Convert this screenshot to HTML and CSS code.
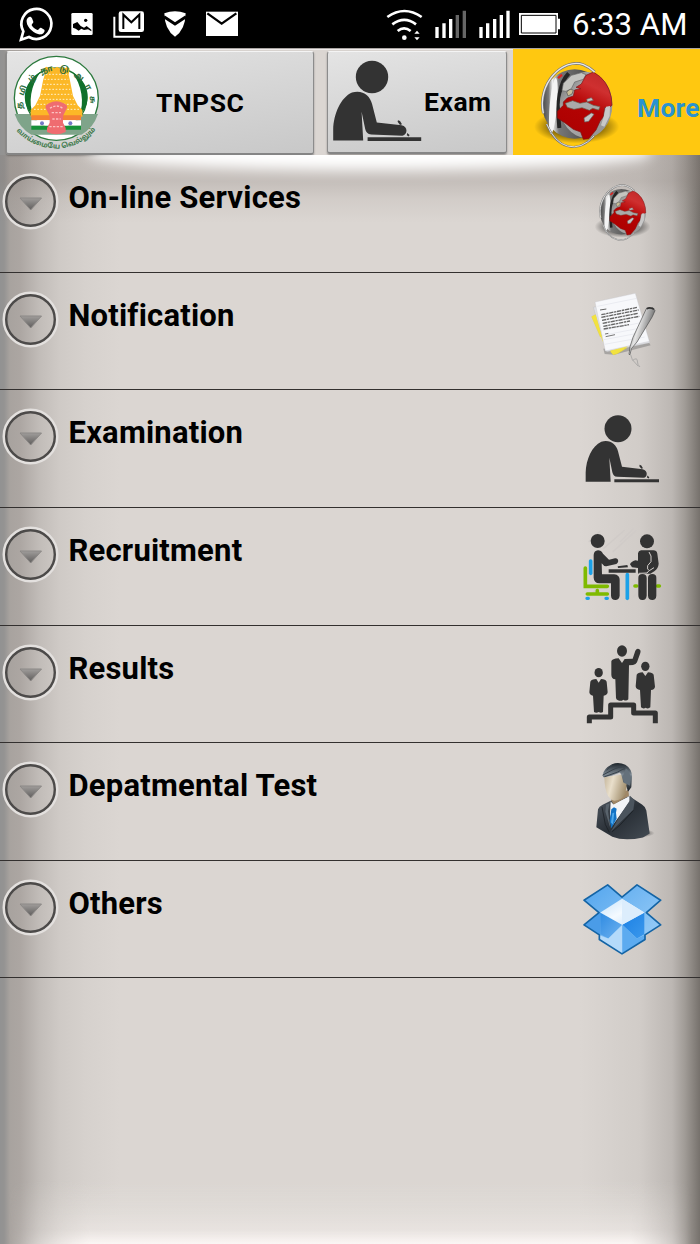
FILE: index.html
```html
<!DOCTYPE html>
<html lang="en">
<head>
    <meta charset="UTF-8">
    <title>TNPSC</title>
    <link rel="stylesheet" href="styles.css">
</head>
<body>
    <svg class="defs" width="0" height="0">
        <defs>
            <linearGradient id="rim" x1="0" x2="1">
                <stop offset="0" stop-color="#444"/>
                <stop offset=".1" stop-color="#777"/>
                <stop offset=".16" stop-color="#eee"/>
                <stop offset=".26" stop-color="#777"/>
                <stop offset="1" stop-color="#333"/>
            </linearGradient>
            <linearGradient id="land" x1="0.7" y1="0" x2="0.3" y2="1">
                <stop offset="0" stop-color="#c22a2a"/>
                <stop offset=".2" stop-color="#cf3030"/>
                <stop offset=".5" stop-color="#b40404"/>
                <stop offset="1" stop-color="#ac0000"/>
            </linearGradient>
            <linearGradient id="sea" x1="0" x2="1" y2="1">
                <stop offset="0" stop-color="#5c5c5c"/>
                <stop offset=".35" stop-color="#b4b4b4"/>
                <stop offset="1" stop-color="#8c8c8c"/>
            </linearGradient>
            <radialGradient id="shade">
                <stop offset="0" stop-color="#000" stop-opacity=".75"/>
                <stop offset=".6" stop-color="#000" stop-opacity=".45"/>
                <stop offset="1" stop-color="#000" stop-opacity="0"/>
            </radialGradient>
            <linearGradient id="arrowFill" x2="0" y2="1">
                <stop offset="0" stop-color="#a09d9b"/>
                <stop offset="1" stop-color="#5f5d5c"/>
            </linearGradient>
            <linearGradient id="pen" x1="0" y1="0" x2="1" y2=".5">
                <stop offset="0" stop-color="#444"/>
                <stop offset=".45" stop-color="#e6e6e6"/>
                <stop offset="1" stop-color="#444"/>
            </linearGradient>
            <linearGradient id="face" x2="1" y2=".3">
                <stop offset="0" stop-color="#c4b59b"/>
                <stop offset=".4" stop-color="#e9dfcb"/>
                <stop offset="1" stop-color="#a3906f"/>
            </linearGradient>
            <linearGradient id="hair" x2="0" y2="1">
                <stop offset="0" stop-color="#1c2329"/>
                <stop offset=".4" stop-color="#7b8791"/>
                <stop offset="1" stop-color="#161b20"/>
            </linearGradient>
            <linearGradient id="suit" x2="1" y2="1">
                <stop offset="0" stop-color="#515962"/>
                <stop offset=".5" stop-color="#2a3037"/>
                <stop offset="1" stop-color="#444c54"/>
            </linearGradient>
            <linearGradient id="flap" x2="1" y2="1">
                <stop offset="0" stop-color="#52a5ee"/>
                <stop offset="1" stop-color="#a3d2f8"/>
            </linearGradient>
            <linearGradient id="inner" x2="1" y2="1">
                <stop offset="0" stop-color="#c6e3fb"/>
                <stop offset=".5" stop-color="#f4faff"/>
                <stop offset="1" stop-color="#c4e2fb"/>
            </linearGradient>
            <linearGradient id="sideLeft" x2="1" y2="1">
                <stop offset="0" stop-color="#2f8be2"/>
                <stop offset="1" stop-color="#6fb3f0"/>
            </linearGradient>
            <linearGradient id="sideRight" x2="1" y2="1">
                <stop offset="0" stop-color="#1b80e4"/>
                <stop offset="1" stop-color="#3b98ec"/>
            </linearGradient>
        </defs>

        <symbol id="globe" viewBox="540 180 270 270">
            <ellipse cx="680" cy="380" rx="128" ry="50" fill="url(#shade)"/>
            <ellipse cx="674" cy="312" rx="98" ry="104" fill="url(#rim)"/>
            <ellipse cx="610" cy="318" rx="11" ry="84" fill="#f4f4f4" transform="rotate(5 610 318)"/>
            <path d="M656 220q-40 40-28 164" fill="none" stroke="#242424" stroke-width="12"/>
            <ellipse cx="708" cy="314" rx="79" ry="99" fill="url(#sea)"/>
            <path d="M640 250l24-24 30-8 14 6-8 14-26 8-10 20-16 8-12-2z" fill="#c4c4c0" stroke="#666" stroke-width="2"/>
            <path d="M678 262l16-10 14-26 22-10q44 24 54 76l2 24-12 8-10-2-4 28-10 14-12 26-22 26-16 2-8-22-22-8-26-20-22-14 0-20 18-18 0-10 12-12 18-6 4-18 18-4z" fill="url(#land)" stroke="#7c1010" stroke-width="2"/>
            <path d="M646 310l22-8 22 8 20-4 20 10 20 4-4 10-18-5-10 6-22-8-24 5-20-6z" fill="#aaa" stroke="#665" stroke-width="2"/>
            <path d="M710 298l14-5 6 8-18 4zM702 354l22-15 8 4-16 21-12 2z" fill="#c4c4c4" stroke="#666" stroke-width="2"/>
            <path d="M768 320l12-2-1 30-16 32-10-4 8-26z" fill="#c8c8c8"/>
            <path d="M650 276l10-8 10 2-4 12-12 6z" fill="#c9bd96" stroke="#555" stroke-width="2"/>
            <path d="M580 340C560 250 640 172 700 194q20 8 34 22" fill="none" stroke="#777" stroke-width="8"/>
            <path d="M580 340C560 250 640 172 700 194q20 8 34 22" fill="none" stroke="#e8e8e8" stroke-width="4"/>
            <path d="M590 372q24 56 62 66 42 12 80-30" fill="none" stroke="#777" stroke-width="6"/>
            <path d="M590 372q24 56 62 66 42 12 80-30" fill="none" stroke="#ddd" stroke-width="3"/>
            <path d="M622 232l12-11 4 6-12 10z" fill="#d22"/>
        </symbol>

        <symbol id="writer" viewBox="39 24.6 240 240">
            <g fill="#333">
                <circle cx="144" cy="87" r="40.500"/>
                <path d="M47 246V218C48 180 66 138 94 126c26-8 45 8 50 28l12 47 62 7c16 3 16 24 2 26l-78-3c-9-1-13-6-15-14l-9-43 4 72z"/>
                <path d="M133 238h134v9H133z"/>
                <path d="M209 195l5 2 5 8-5 2-6-8zM232 227l6 5-2 4-5-3z"/>
            </g>
        </symbol>

        <symbol id="arrow" viewBox="0 0 58 58">
            <circle cx="28.500" cy="28.500" r="26.500" fill="none" stroke="#e3e0de" stroke-width="3"/>
            <circle cx="28.500" cy="28.500" r="24.300" fill="none" stroke="#4c4a49" stroke-width="2.400"/>
            <path d="M18 25h21.500L28.700 37z" fill="url(#arrowFill)" stroke="#8b8886" stroke-width="1" stroke-linejoin="round"/>
        </symbol>
    </svg>

    <div class="status-bar">
        <svg width="350" height="48" viewBox="0 0 1050 144">
            <path d="M63 119l7-25a45 45 0 1 1 17 17z" fill="none" stroke="#fff" stroke-width="8"/>
            <path d="M84 53c5-5 10-3 12 2l4 10c1 4-6 7-5 11 4 7 9 11 17 14 4 0 7-8 11-7l10 6c3 5-3 13-10 14-15 3-42-19-43-37-1-6 1-10 4-13z" fill="#fff"/>
            <path d="M218 39h56q4 0 4 4v58q0 4-4 4h-56q-4 0-4-4V43q0-4 4-4z" fill="#fff"/>
            <path d="M219 83V72l13-6 10 12 10 5 8-5 14 11v5l-10-6-12 2-8-4-8 6-9-6z" fill="#000"/>
            <circle cx="257" cy="61" r="5" fill="#000"/>
            <path d="M343 50v60h77" fill="none" stroke="#fff" stroke-width="6"/>
            <rect x="356" y="34" width="76" height="62" rx="7" fill="#fff"/>
            <path d="M370 87V44l24 23 24-23v43" fill="none" stroke="#000" stroke-width="6"/>
            <path d="M493 40q32-12 64 0-1 50-32 70-31-20-32-70z" fill="#fff"/>
            <path d="M492 50l33 22 33-22" fill="none" stroke="#000" stroke-width="9"/>
            <path d="M618 35h96v73h-96z" fill="#fff"/>
            <path d="M622 40l43 31 44-31" fill="none" stroke="#000" stroke-width="7"/>
        </svg>
        <svg width="215" height="48" viewBox="0 0 645 144">
            <g fill="none" stroke="#fff" stroke-width="8">
                <path d="M112 51q51-36 103 0"/>
                <path d="M127 73q36-27 71 0" />
                <path d="M143 93q19-16 39 0"/>
            </g>
            <circle cx="163" cy="113" r="7" fill="#fff"/>
            <path d="M201 92l8 9h-16zM193 112h16l-8 9z" fill="#fff"/>
            <path d="M256 81h10v33h-10zM277 70h10v44h-10zM297 57h10v57h-10zM388 81h10v33h-10zM408 70h10v44h-10zM429 57h10v57h-10zM449 45h10v69h-10zM469 32h10v82h-10z" fill="#fff"/>
            <path d="M317 45h10v69h-10zM338 32h10v82h-10z" fill="#666"/>
            <path d="M507 39h117v17h6v32h-6v17H507z" fill="#fff"/>
            <path d="M514 46h104v53H514z" fill="none" stroke="#000" stroke-width="3"/>
        </svg>
        <span class="clock">6:33 AM</span>
    </div>

    <div class="app">
        <div class="tabs">
            <div class="tab tab-home">
                <svg width="90" height="98" viewBox="36 27 270 294">
                    <circle cx="169" cy="160" r="126" fill="#fff" stroke="#2c7a3e" stroke-width="4"/>
                    <path d="M44 207h250q-14 42-50 62H94q-36-20-50-62z" fill="#7fa48a"/>
                    <circle cx="169" cy="160" r="91" fill="#fff" stroke="#1c7431" stroke-width="4"/>
                    <path d="M122 80C62 115 64 182 100 210 84 175 92 120 122 80zM216 80c60 35 58 102 22 130 16-35 8-90-22-130z" fill="#11702b"/>
                    <path d="M132 70l7-5 8 5 8-5 8 5 8-5 8 5 8-5 8 5 8-5 6 6-3 18 4 18 9 46 14 28 14 14v20H92v-20l14-14 14-28 9-46 5-18z" fill="#fcb827"/>
                    <g stroke="#fff0c8" stroke-width="3" stroke-dasharray="5 5" fill="none">
                        <path d="M137 88h64M133 103h72M130 118h78M127 133h84M123 148h92M118 163h104M111 178h120M102 193h136"/>
                    </g>
                    <path d="M94 211h149v15H94z" fill="#f58233"/>
                    <path d="M94 226h149v16H94z" fill="#fff"/>
                    <path d="M94 242h149v12H94z" fill="#159137"/>
                    <circle cx="126" cy="235" r="6" fill="#7379c6"/>
                    <circle cx="211" cy="235" r="6" fill="#7379c6"/>
                    <path d="M139 193q-8-12 8-18 22-13 44 0 16 6 8 18l-10 20v20l8 16v12q-28 14-56 0v-12l8-16v-20z" fill="#ef6c70"/>
                    <path d="M150 190q19-14 38 0M155 203h28M157 222h25M148 245h43" fill="none" stroke="#fbc2c2" stroke-width="4" stroke-dasharray="7 4"/>
                    <path id="ringTop" d="M69 200A102 102 0 1 1 269 200" fill="none"/>
                    <path id="ringBottom" d="M47 254Q96 309 169 310 240 309 296 246" fill="none"/>
                    <text class="seal-name"><textPath href="#ringTop" startOffset="8">த மி ழ் நா டு அ ர சு</textPath></text>
                    <text class="seal-motto"><textPath href="#ringBottom" startOffset="4">வாய்மையே வெல்லும்</textPath></text>
                </svg>
                <span class="tab-label">TNPSC</span>
            </div>
            <div class="tab tab-exam">
                <svg width="96" height="96"><use href="#writer"/></svg>
                <span class="tab-label">Exam</span>
            </div>
            <div class="tab-more">
                <svg width="90" height="90"><use href="#globe"/></svg>
                <span class="tab-label">More</span>
            </div>
        </div>

        <div class="menu">
            <div class="menu-item">
                <svg class="expand"><use href="#arrow"/></svg>
                <span class="menu-label">On-line Services</span>
                <div class="menu-icon"><svg class="small-globe" width="59" height="59"><use href="#globe"/></svg></div>
            </div>
            <div class="menu-item">
                <svg class="expand"><use href="#arrow"/></svg>
                <span class="menu-label">Notification</span>
                <div class="menu-icon">
                    <svg width="80" height="80" viewBox="39 32 240 240">
                        <path d="M100 205l134-22 8 12-110 28-28-2z" fill="#777" opacity=".5"/>
                        <path d="M65 109l16-9 20 60-10 10zM122 214l50-12-30 18-12 3z" fill="#f2e23f" stroke="#d9c93a"/>
                        <path d="M70 81l120-24 50 130-130 27z" fill="#dfe0e4" stroke="#b5b5ba"/>
                        <path d="M65 109l12-6 24 86z" fill="#f2e23f"/>
                        <path d="M75 65l121-26 42 144-132 29z" fill="#f7f8fb" stroke="#c2c3c8"/>
                        <path d="M120 211l54-13-32 20-12 5z" fill="#f2e23f"/>
                        <path d="M82 78l118-24M98 150l110-22M98 165l114-22M102 178l116-22M104 192l120-22" stroke="#dcdfe6" stroke-width="1.5"/>
                        <path d="M90 89l19-3" stroke="#666" stroke-width="3"/>
                        <path d="M94 103l108-22M94 111l112-22M96 120l108-21M98 129l110-21M100 138l80-16M101 146l76-13" stroke="#666" stroke-width="4" stroke-dasharray="13 2 7 2"/>
                        <path d="M105 161l10-2M107 169l28-6" stroke="#777" stroke-width="3"/>
                        <path d="M229 85l20-3 6 9-8 18-46 76-17 20-4 18-3-1 3-23 9-28z" fill="url(#pen)" stroke="#4b4b4b" stroke-width="2"/>
                        <path d="M230 85q10-6 22 2" fill="none" stroke="#333" stroke-width="5"/>
                        <path d="M182 223l5 15 18 20M188 240q14-10 14 2t8 18" fill="none" stroke="#999" stroke-width="2"/>
                    </svg>
                </div>
            </div>
            <div class="menu-item">
                <svg class="expand"><use href="#arrow"/></svg>
                <span class="menu-label">Examination</span>
                <div class="menu-icon"><svg width="80" height="80"><use href="#writer"/></svg></div>
            </div>
            <div class="menu-item">
                <svg class="expand"><use href="#arrow"/></svg>
                <span class="menu-label">Recruitment</span>
                <div class="menu-icon">
                    <svg width="80" height="80" viewBox="39 32 240 240">
                        <path d="M56 80l34-32M100 100l64-56M128 110l72-66M50 250l40-38M190 246l60-60M150 80l40-40" stroke="#d0cbc8" stroke-width="4"/>
                        <g fill="none" stroke-linecap="round">
                            <path d="M46 158v55h66M52 236h60M82 226v8" stroke="#7fba00" stroke-width="11"/>
                            <path d="M62 137v37" stroke="#1ba1e8" stroke-width="11"/>
                            <path d="M172 178v71" stroke="#1ba1e8" stroke-width="11"/>
                            <path d="M195 212h5M262 212h6" stroke="#7fba00" stroke-width="11"/>
                            <path d="M51 249h4M108 249h4" stroke="#1ba1e8" stroke-width="10"/>
                        </g>
                        <g fill="#333">
                            <circle cx="83" cy="77" r="21"/>
                            <path d="M71 119q1-13 13-14 9 0 15 10l18 18 18-4c11-2 13 13 4 17l-30 7q-7 1-14-9l1 33h36c12 1 17 8 17 17v47q-2 13-13 13-12 0-13-13v-37H88q-16-1-17-17z"/>
                            <path d="M116 162h81v10h-81zM143 153l29-4 2 7-30 2zM180 147q3-8 16-12l8 1v22l-18-2z"/>
                            <circle cx="231" cy="78" r="21"/>
                            <path d="M204 114q1-8 9-9h37q10 0 12 10l4 30q-1 14-13 23l-12 7h-37zM205 187q0-11 12-11 13 0 13 12v53q-2 14-13 13-12 0-12-14zM234 187q1-11 13-11 12 0 12 11v54q-1 13-12 13-12 0-13-13z"/>
                        </g>
                        <path d="M237 110l6 12v17l-10 12q-3 12 5 15l14-9M206 174l25-1 6-7" fill="none" stroke="#d5d0cd" stroke-width="3"/>
                    </svg>
                </div>
            </div>
            <div class="menu-item">
                <svg class="expand"><use href="#arrow"/></svg>
                <span class="menu-label">Results</span>
                <div class="menu-icon">
                    <svg width="80" height="80" viewBox="39 26 240 240">
                        <g fill="#333">
                            <ellipse cx="156" cy="47" rx="15" ry="17"/>
                            <path d="M124 78q2-8 22-9l10 14 8-12 24-1 8-24q5-9 14-3 3 3 1 10l-10 28q-3 7-12 8l-12 1-2 102q-6 7-15 1-7 6-16 2-5-2-6-7l-2-56q-12-2-12-14z"/>
                            <ellipse cx="86" cy="112" rx="12.500" ry="14"/>
                            <path d="M61 139q3-7 18-8l7 11 7-11q14 1 17 8l3 32q-1 9-12 10l-2 49q-6 5-13 0-7 5-14 0l-3-49q-10-1-11-10z"/>
                            <ellipse cx="226" cy="93" rx="12.500" ry="14"/>
                            <path d="M200 118q3-6 18-7l8 11 8-11q14 1 17 7l4 36q-1 9-12 10l-2 52q-7 6-14 1-7 5-14-1l-3-52q-12-1-13-11z"/>
                        </g>
                        <path d="M58 264v-19h64v-36h69v24h65v31" fill="none" stroke="#333" stroke-width="15" stroke-linejoin="round"/>
                    </svg>
                </div>
            </div>
            <div class="menu-item">
                <svg class="expand"><use href="#arrow"/></svg>
                <span class="menu-label">Depatmental Test</span>
                <div class="menu-icon">
                    <svg width="80" height="80" viewBox="39 33.600 240 240">
                        <ellipse cx="184" cy="250" rx="70" ry="15" fill="url(#shade)"/>
                        <path d="M79 232l5-54q3-8 14-13l24-12 56-14 38 25q11 7 13 18l10 69-20 12q-56 12-92-2z" fill="url(#suit)"/>
                        <path d="M122 155l8 8 48-24 2 15-27 38-25 34-8-32z" fill="#f2f4f7"/>
                        <path d="M124 178l8-6 8 5-2 12 2 18-16 28-5-22z" fill="#1372c4"/>
                        <path d="M127 190l6-2-4 36-6-6z" fill="#4ba7eb"/>
                        <path d="M180 138l14 14-4 28-67 65 30-53 25-38z" fill="#4b545d"/>
                        <path d="M119 160l-5 24 8 54-16-52 2-22z" fill="#59636c"/>
                        <path d="M190 182l-40 44-24 20M96 172l10 52 12 24" fill="none" stroke="#171b20" stroke-width="2"/>
                        <path d="M127 140l48-20 2 18-46 26-7-12z" fill="#a08766"/>
                        <path d="M103 82l56-8 13 30-7 30q-8 16-31 19-11-1-20-15-10-19-11-56z" fill="url(#face)"/>
                        <path d="M98 77q1-20 28-34 20-8 40 2 20 12 20 36l-2 31-10 14-5-18 2-10-11-1-6-22-4-7-26 10-24 4z" fill="url(#hair)"/>
                        <path d="M98 76l28-15q24-12 37-9M103 81l39-14q18-10 23-10M126 46l-16 15" fill="none" stroke="#39424b" stroke-width="3"/>
                        <path d="M168 56l9 8 6 22-3 22-9-5-10-4-3-19z" fill="#65717b"/>
                    </svg>
                </div>
            </div>
            <div class="menu-item">
                <svg class="expand"><use href="#arrow"/></svg>
                <span class="menu-label">Others</span>
                <div class="menu-icon">
                    <svg width="80" height="80" viewBox="39 26.400 240 240">
                        <path d="M42 90l71-46 43 37 45-37 71 46-43 37 43 37-47 30v14l-69 43-68-43v-14l-46-30 45-37z" fill="url(#flap)"/>
                        <path d="M42 164l45-37 4 0v68z" fill="#4a9ce8"/>
                        <path d="M91 128l66 36-42 41-24-13z" fill="url(#sideLeft)"/>
                        <path d="M223 128l-66 36 44 41 22-13z" fill="url(#sideRight)"/>
                        <path d="M91 127l65-41 67 41-67 37z" fill="url(#inner)"/>
                        <path d="M156 86l67 41-67 37z" fill="#dcedfc"/>
                        <path d="M157 164l-42 41-27-10v13l69 43z" fill="#b4dafa"/>
                        <path d="M157 164l44 41 24-11v14l-68 43z" fill="#5cabf0"/>
                        <path d="M42 90l71-46 43 37 45-37 71 46-43 37 43 37-47 30v14l-69 43-68-43v-14l-46-30 45-37z" fill="none" stroke="#1464a5" stroke-width="5" stroke-linejoin="round"/>
                    </svg>
                </div>
            </div>
        </div>
    </div>
</body>
</html>
```

FILE: styles.css
```css
* {
    box-sizing: border-box;
}
body {
    margin: 0;
    width: 700px;
    height: 1244px;
    overflow: hidden;
    display: flex;
    flex-direction: column;
    font-family: Roboto, "Noto Sans", sans-serif;
    color: #000;
}
svg {
    display: block;
    flex-shrink: 0;
}
.defs {
    position: absolute;
}

/* status bar */
.status-bar {
    height: 48px;
    background: #000;
    display: flex;
    align-items: center;
    flex-shrink: 0;
}
.clock {
    margin-left: 7px;
    font-size: 31.2px;
    line-height: 48px;
    padding-top: 2px;
    color: #fff;
    white-space: nowrap;
}

/* page background with dark side edges */
.app {
    flex: 1;
    position: relative;
    background: linear-gradient(to right, #929292 0, #949392 4px, #a8a39f 10px, #aca6a2 20px, #c2bdb9 40px, #cfcac6 60px, #d6d1cd 85px, #dbd6d2 120px, #dbd6d2 580px, #d1ccc8 640px, #bcb7b3 672px, #a09b96 685px, #76716c 700px);
}
/* light rising from the bottom edge */
.app::after {
    content: "";
    position: absolute;
    left: 0;
    right: 0;
    bottom: 0;
    height: 64px;
    background: linear-gradient(to top, #fbf6f4 0, rgba(236, 231, 228, .75) 14px, rgba(228, 224, 220, .5) 36px, rgba(219, 214, 210, 0) 64px);
    -webkit-mask-image: linear-gradient(to right, transparent 8px, #000 90px, #000 630px, transparent 692px);
    mask-image: linear-gradient(to right, transparent 8px, #000 90px, #000 630px, transparent 692px);
}

/* tabs */
.tabs {
    height: 107px;
    display: flex;
    align-items: flex-start;
    padding-left: 6px;
    border-top: 1px solid #aaa5a3;
    box-shadow: inset 0 1px 0 #eeeaea;
}
.tab {
    margin-top: 2px;
    display: flex;
    border: 1px solid #8c8c8c;
    border-top-color: #f4f4f4;
    border-bottom: 2px solid #858585;
    border-radius: 3px;
    background: linear-gradient(170deg, #e4e4e4, #c8c8c8);
    box-shadow: 0 1px 2px rgba(0, 0, 0, .35);
}
.tab-home {
    width: 308px;
    height: 104px;
    padding: 2px 0 0 5px;
}
.tab-home svg {
    overflow: visible;
}
.tab-exam {
    width: 180px;
    height: 103px;
    margin-left: 13px;
    padding-left: 2px;
}
.tab-label {
    font-size: 26.5px;
    font-weight: 700;
    line-height: 30px;
    letter-spacing: .5px;
    white-space: nowrap;
}
.tab-home .tab-label {
    margin: 34px 0 0 54px;
}
.tab-exam .tab-label {
    margin: 35px 0 0 -2px;
}
.tab-more {
    flex: 1;
    height: 106px;
    margin-left: 6px;
    padding: 11px 0 0 17px;
    display: flex;
    overflow: hidden;
    background: #ffc810;
}
.tab-more .tab-label {
    margin: 33px 0 0 17px;
    letter-spacing: .2px;
    color: #2a93cf;
}

/* expandable list */
.menu {
    position: relative;
    overflow: hidden;
    background: linear-gradient(rgba(130, 120, 115, .22) 0, rgba(130, 120, 115, .26) 26px, rgba(130, 120, 115, .1) 44px, rgba(130, 120, 115, 0) 68px) no-repeat;
}
.menu::before {
    content: "";
    position: absolute;
    left: 90px;
    top: -24px;
    width: 560px;
    height: 39px;
    background: #fff;
    border-radius: 0 0 50% 50% / 0 0 16px 16px;
    filter: blur(7px);
}
.menu-item {
    position: relative;
    height: 117.65px;
    display: flex;
    align-items: flex-start;
    border-bottom: 1px solid #33302f;
}
.expand {
    width: 58px;
    height: 58px;
    margin: 18px 0 0 2px;
}
.menu-label {
    flex: 1;
    margin: 25px 0 0 8.5px;
    font-size: 31px;
    font-weight: 700;
    line-height: 36px;
    letter-spacing: .2px;
}
.menu-icon {
    width: 80px;
    height: 80px;
    margin: 18px 37px 0 0;
}
.small-globe {
    margin: 10px 0 0 9px;
}
.seal-name {
    font: bold 24px "Noto Sans Tamil", "Noto Sans", sans-serif;
    word-spacing: 11px;
    fill: #2c6e3d;
}
.seal-motto {
    font: bold 21px "Noto Sans Tamil", "Noto Sans", sans-serif;
    fill: #3f7a4d;
}
```
